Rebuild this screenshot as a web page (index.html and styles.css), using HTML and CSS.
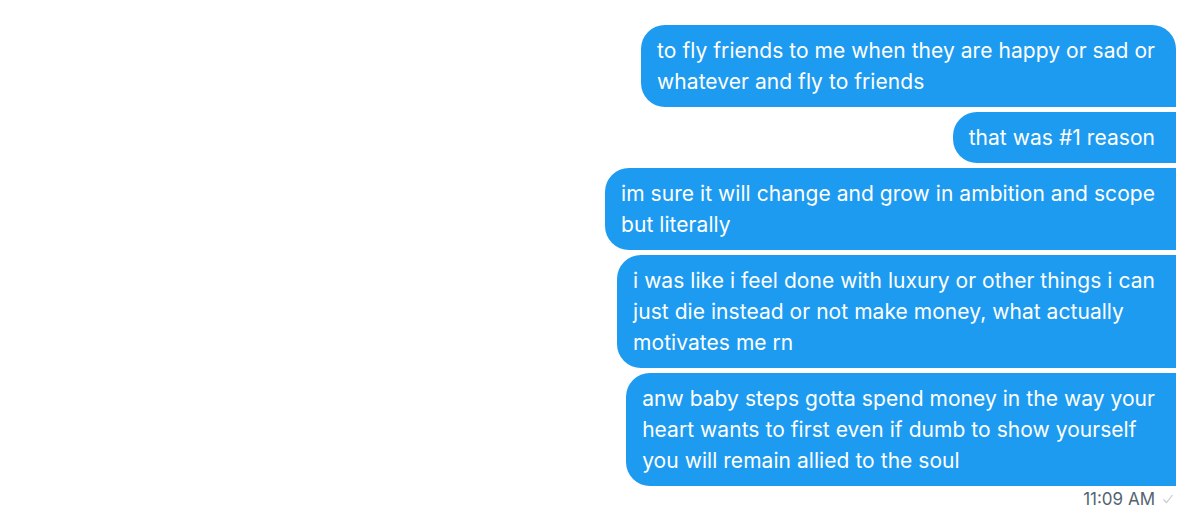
FILE: index.html
```html
<!DOCTYPE html>
<html>
<head>
<meta charset="utf-8">
<link rel="stylesheet" href="styles.css">
</head>
<body>
<div class="thread">
  <div class="bubble first">to fly friends to me when they are happy or sad or<br>whatever and fly to friends</div>
  <div class="bubble">that was #1 reason</div>
  <div class="bubble">im sure it will change and grow in ambition and scope<br>but literally</div>
  <div class="bubble">i was like i feel done with luxury or other things i can<br>just die instead or not make money, what actually<br>motivates me rn</div>
  <div class="bubble">anw baby steps gotta spend money in the way your<br>heart wants to first even if dumb to show yourself<br>you will remain allied to the soul</div>
  <div class="meta">
    <span class="time">11:09 AM</span>
    <svg class="check" width="12" height="12" viewBox="0 0 12 12"><path d="M1.5 6.5 L4.5 9.5 L10.5 2" fill="none" stroke="#c4ccd3" stroke-width="1.2"/></svg>
  </div>
</div>
</body>
</html>
```
FILE: styles.css
```css
html, body {
  margin: 0;
  padding: 0;
  background: #ffffff;
}
body {
  font-family: Inter, "Liberation Sans", sans-serif;
  width: 1200px;
  height: 525px;
  overflow: hidden;
}
.thread {
  display: flex;
  flex-direction: column;
  align-items: flex-end;
  gap: 5px;
  padding: 25px 24px 0 0;
}
.bubble {
  background: #1d9bf0;
  color: #ffffff;
  font-size: 21px;
  line-height: 31px;
  letter-spacing: 0.05px;
  padding: 10px 21px 10px 16px;
  white-space: nowrap;
  border-radius: 24px 0 0 24px;
}
.bubble.first {
  border-radius: 24px 24px 0 24px;
}
.meta {
  display: flex;
  align-items: center;
  gap: 7px;
  margin-top: -4px;
  margin-right: 2px;
  color: #536471;
  font-size: 17px;
  line-height: 24px;
}
.check {
  display: block;
}
```
